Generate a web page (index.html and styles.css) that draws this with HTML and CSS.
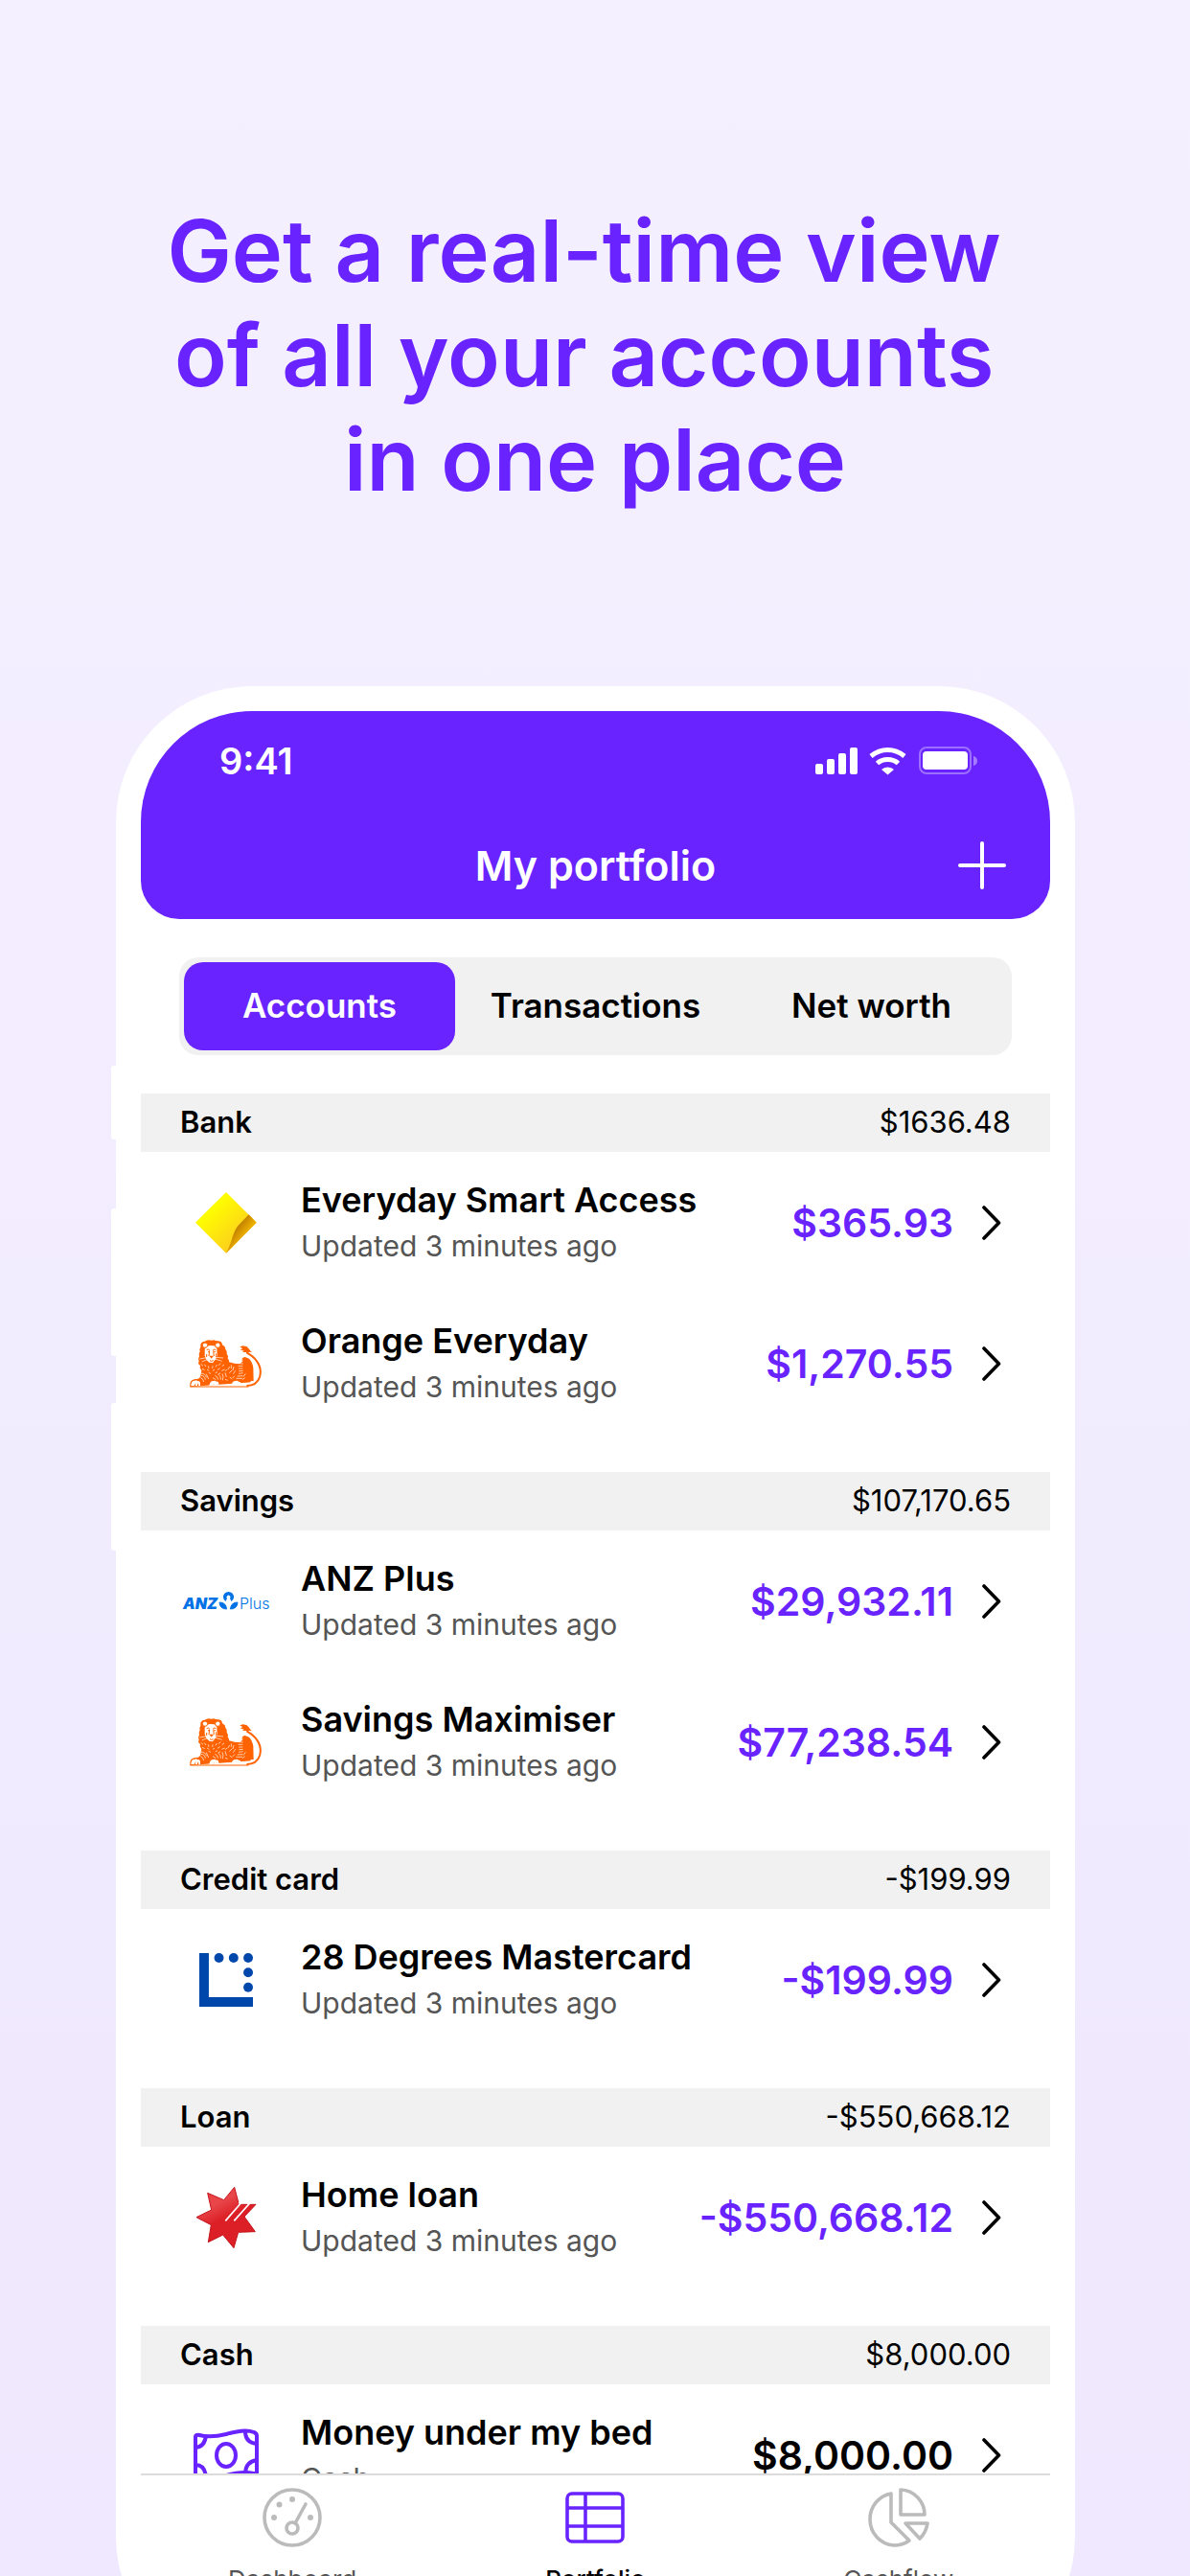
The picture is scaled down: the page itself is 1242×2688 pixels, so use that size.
FILE: index.html
```html
<!DOCTYPE html>
<html lang="en">
<head>
  <meta charset="UTF-8">
  <meta name="viewport" content="width=device-width, initial-scale=1">
  <title>My portfolio</title>
  <link rel="stylesheet" href="styles.css">
</head>
<body>
  <!-- shared icons -->
  <svg class="sprite" aria-hidden="true">
    <symbol id="chevron" viewBox="0 0 20 36">
      <path d="M2 2l15.500 16L2 34" fill="none" stroke="#000" stroke-width="3.600" stroke-linecap="round" stroke-linejoin="round"/>
    </symbol>
    <symbol id="lion" viewBox="0 0 228 148">
      <path d="M1 146v-10q2-11 14-13l12-2q8-4 8-14l2-12-5-8 1-7-6-6 2-8-2-7 3-8-1-8 3-7-1-7 3-7 0-9q4-9 13-9l6-3 7-1 8 1 7-1 7 2 6 1q13 0 14 12l8 6 2 8 4 6 0 8 4 7-1 7 4 7 0 5 9 2q12 5 26 2l6-5q-3-13 9-15l13 5q11 12 13 29l1 41h-9v4z" fill="#ff6200"/>
      <path d="M178 143q32 0 41-27 8-26-9-50-10-15-32-27" fill="none" stroke="#ff6200" stroke-width="6"/>
      <path d="M157 21l10-3 11 2 6 6 7 9 4 4-8-2-5 3-7-2-10 0 5-4-12-4 8-3z" fill="#ff6200"/>
      <path d="M51 20l12-3 14 1 8 8 1 22-5 12-9 12-11-2-9-9-5-13 0-19z" fill="#fff"/>
      <g fill="#fff" stroke="#ff6200" stroke-width="3">
        <circle cx="48" cy="16" r="8"/>
        <circle cx="88" cy="16" r="8"/>
      </g>
      <g fill="none" stroke="#ff6200" stroke-width="3">
        <path d="M53 31q5-4 9 0M73 31q5-4 9 0M62 33l-2 17M74 33l2 17M57 37h4M76 37h5M53 44v9M83 42v11M63 64q5 4 11 0"/>
      </g>
      <path d="M61 49h14l-7 9z" fill="#ff6200"/>
      <g fill="none" stroke="#fff" stroke-width="2">
        <path d="M54 55l-23 4M57 60l-19 8M83 54l22 2M81 60l20 6"/>
        <path d="M35 75l7 6M46 76l5 7M58 81l2 8M72 81l-1 8M86 77l-5 7M97 73l-7 6M39 90l8 4M54 92l7 4M78 93l-6 3M95 88l-8 5M108 77l-7 5M110 92l-10 4M59 102l7 3M80 103l7-3M96 103l-7 4"/>
        <path d="M35 104q15 1 17 13M35 111q12 0 14 13M34 118q8 2 10 13M52 106l7 16"/>
        <path d="M79 111q9 3 10 13M90 108q8 5 7 16M102 105q5 9 1 21M72 118l10 6M111 102l4 14M118 92l-7 5M125 83l-5 9M130 78l0 11M133 94l-9 9M138 83l-3 12M143 96l-7 10M141 112l-7 7M125 116l8 6M111 123l8 3"/>
        <path d="M155 65l11 2M153 73l14 1M152 81l14 0M153 89l13 0M154 97l13-1M153 105l14-2M149 113l17-1M145 120l20 0M160 61l7 1M175 105l-7 10M173 118l-8 6"/>
      </g>
      <g fill="#fff">
        <path d="M4 143q0-16 12-16 6-3 8 2 7-3 9 5v9h-5l-1-9-4 9h-5l1-9-5 9z"/>
        <path d="M61 145q1-17 13-17 6-3 9 2 7-2 8 7v8h-6l0-8-4 8h-5l0-8-5 8z"/>
        <path d="M131 144q1-16 12-16 7-3 10 2 7-1 7 7v7h-6v-7l-4 7h-5v-7l-5 7z"/>
      </g>
      <path d="M1 146h184" stroke="#ff6200" stroke-width="3"/>
    </symbol>
  </svg>

  <main class="page">
    <h1 class="headline">Get a real-time view&nbsp;<br>of all your accounts&nbsp;<br>in one place</h1>

    <div class="phone">
      <span class="side-button side-button-mute"></span>
      <span class="side-button side-button-up"></span>
      <span class="side-button side-button-down"></span>

      <div class="screen">
        <header class="top">
          <div class="status-bar">
            <span class="time">9:41</span>
            <svg width="170" height="30" viewBox="0 0 170 30" aria-hidden="true">
              <g fill="#fff">
                <rect x="0" y="18" width="8" height="11" rx="2"/>
                <rect x="12" y="13" width="8" height="16" rx="2"/>
                <rect x="24" y="7" width="8" height="22" rx="2"/>
                <rect x="36" y="1" width="8" height="28" rx="2"/>
                <path d="M75.500 21.500q-4 0-6.500 2.500l6.500 5.500 6.500-5.500q-2.500-2.500-6.500-2.500z"/>
              </g>
              <g fill="none" stroke="#fff" stroke-width="5">
                <path d="M58 10q8-6.500 17.500-6.500T93 10"/>
                <path d="M64.500 17.500q4.500-4 11-4t11 4"/>
              </g>
              <rect x="109" y="1" width="53" height="27" rx="7" fill="none" stroke="#fff" stroke-opacity=".35" stroke-width="2"/>
              <rect x="112" y="5" width="47" height="19" rx="4" fill="#fff"/>
              <path d="M165 10q4 1 4 5t-4 5z" fill="#fff" fill-opacity=".4"/>
            </svg>
          </div>
          <div class="title-bar">
            <h2 class="title">My portfolio</h2>
            <button class="add" type="button" aria-label="Add account">
              <svg width="50" height="50" viewBox="0 0 50 50">
                <path d="M25 2v46M2 25h46" stroke="#fff" stroke-width="4" stroke-linecap="round"/>
              </svg>
            </button>
          </div>
        </header>

        <div class="segments">
          <button class="segment active" type="button">Accounts</button>
          <button class="segment" type="button">Transactions</button>
          <button class="segment" type="button">Net worth</button>
        </div>

        <div class="list">
          <section class="group">
            <h3 class="group-head"><span>Bank</span><span class="total">$1636.48</span></h3>
            <a class="account" href="#">
              <span class="logo">
                <svg width="64" height="64" viewBox="0 0 192 192">
                  <defs>
                    <linearGradient id="cba" x1="0" y1="0" x2="1" y2="1">
                      <stop offset=".25" stop-color="#ffff00"/>
                      <stop offset=".75" stop-color="#fcd01c"/>
                    </linearGradient>
                    <linearGradient id="fold" x1="0" y1="0" x2="1" y2="1">
                      <stop offset=".2" stop-color="#a86400"/>
                      <stop offset=".6" stop-color="#f0b400"/>
                      <stop offset="1" stop-color="#ffd400"/>
                    </linearGradient>
                  </defs>
                  <path d="M96 0l95 95-95 96L0 95z" fill="url(#cba)"/>
                  <path d="M167 70l24 25-95 96q10-18 16-38 10-36 22-49z" fill="url(#fold)"/>
                </svg>
              </span>
              <span class="info"><span class="name">Everyday Smart Access</span><span class="sub">Updated 3 minutes ago</span></span>
              <span class="amount">$365.93</span>
              <svg class="chevron"><use href="#chevron"/></svg>
            </a>
            <a class="account" href="#">
              <span class="logo"><svg width="76" height="50"><use href="#lion"/></svg></span>
              <span class="info"><span class="name">Orange Everyday</span><span class="sub">Updated 3 minutes ago</span></span>
              <span class="amount">$1,270.55</span>
              <svg class="chevron"><use href="#chevron"/></svg>
            </a>
          </section>

          <section class="group">
            <h3 class="group-head"><span>Savings</span><span class="total">$107,170.65</span></h3>
            <a class="account" href="#">
              <span class="logo">
                <svg class="anz-logo" width="92" height="20" viewBox="0 0 92 20" fill="#0072e5">
                  <text class="anz" x="1" y="18">ANZ</text>
                  <text class="anz-plus" x="60" y="18">Plus</text>
                  <path d="M45.500 10a5.500 5.500 0 1 1 6 0l-1.500-3a2 2 0 1 0-3 0z"/>
                  <path d="M39 11q7 0 7.500 7-7 0-7.500-7zM58 11q-7 0-7.500 7 7 0 7.500-7z" stroke="#0072e5"/>
                </svg>
              </span>
              <span class="info"><span class="name">ANZ Plus</span><span class="sub">Updated 3 minutes ago</span></span>
              <span class="amount">$29,932.11</span>
              <svg class="chevron"><use href="#chevron"/></svg>
            </a>
            <a class="account" href="#">
              <span class="logo"><svg width="76" height="50"><use href="#lion"/></svg></span>
              <span class="info"><span class="name">Savings Maximiser</span><span class="sub">Updated 3 minutes ago</span></span>
              <span class="amount">$77,238.54</span>
              <svg class="chevron"><use href="#chevron"/></svg>
            </a>
          </section>

          <section class="group">
            <h3 class="group-head"><span>Credit card</span><span class="total">-$199.99</span></h3>
            <a class="account" href="#">
              <span class="logo">
                <svg width="56" height="56" viewBox="0 0 169 169" fill="#0047ab">
                  <path d="M0 0h30v139h139v30H0z"/>
                  <circle cx="62" cy="15" r="15"/>
                  <circle cx="108" cy="15" r="15"/>
                  <circle cx="154" cy="15" r="15"/>
                  <circle cx="154" cy="61" r="15"/>
                  <circle cx="154" cy="108" r="15"/>
                </svg>
              </span>
              <span class="info"><span class="name">28 Degrees Mastercard</span><span class="sub">Updated 3 minutes ago</span></span>
              <span class="amount">-$199.99</span>
              <svg class="chevron"><use href="#chevron"/></svg>
            </a>
          </section>

          <section class="group">
            <h3 class="group-head"><span>Loan</span><span class="total">-$550,668.12</span></h3>
            <a class="account" href="#">
              <span class="logo">
                <svg width="64" height="64" viewBox="69 93 192 192">
                  <defs>
                    <linearGradient id="nab" x1="0" y1="0" x2=".5" y2="1">
                      <stop offset="0" stop-color="#ee3a3e"/>
                      <stop offset=".35" stop-color="#e8474a"/>
                      <stop offset=".6" stop-color="#dc1f26"/>
                    </linearGradient>
                  </defs>
                  <path d="M107 112l51 22 33-40 14 54h53l-36 38 34 47-53 2-14 49-34-41-46 23 9-54-46-24 47-23z" fill="url(#nab)" stroke="#c3161c" stroke-width="3" stroke-linejoin="round"/>
                  <path d="M163 199l48-55-7-2M190 199l50-56-8 3" fill="none" stroke="#fff" stroke-width="5"/>
                </svg>
              </span>
              <span class="info"><span class="name">Home loan</span><span class="sub">Updated 3 minutes ago</span></span>
              <span class="amount">-$550,668.12</span>
              <svg class="chevron"><use href="#chevron"/></svg>
            </a>
          </section>

          <section class="group">
            <h3 class="group-head"><span>Cash</span><span class="total">$8,000.00</span></h3>
            <a class="account" href="#">
              <span class="logo">
                <svg width="70" height="56" viewBox="0 0 70 56" fill="none" stroke="#6823ff" stroke-width="4">
                  <path d="M3 9q0-3 4-2 12 3 28-1 20-6 29-2 3 1 3 4v38q0 2-3 1-12-3-29 2-16 5-29 1-3-1-3-4z"/>
                  <path d="M3 20q10-1 11-13M55 3q0 12 12 13M3 38q10 0 11 13M55 47q0-12 12-14"/>
                  <ellipse cx="35" cy="28" rx="10" ry="12"/>
                </svg>
              </span>
              <span class="info"><span class="name">Money under my bed</span><span class="sub">Cash</span></span>
              <span class="amount manual">$8,000.00</span>
              <svg class="chevron"><use href="#chevron"/></svg>
            </a>
          </section>
        </div>

        <nav class="tab-bar">
          <a class="tab" href="#">
            <svg width="64" height="64" viewBox="0 0 64 64" fill="none" stroke="#bbb" stroke-width="3.600" stroke-linecap="round">
              <circle cx="32" cy="32" r="29"/>
              <circle cx="32" cy="43" r="6"/>
              <path d="M35 38l11-20"/>
              <g fill="#bbb" stroke="none">
                <circle cx="13" cy="32" r="3"/>
                <circle cx="18.500" cy="18.500" r="3"/>
                <circle cx="32" cy="13" r="3"/>
                <circle cx="51" cy="32" r="3"/>
              </g>
            </svg>
            <span>Dashboard</span>
          </a>
          <a class="tab current" href="#">
            <svg width="64" height="64" viewBox="0 0 64 64" fill="none" stroke="#6823ff" stroke-width="3.600">
              <rect x="3" y="7" width="58" height="50" rx="5"/>
              <path d="M3 22h58M3 41h58M22 7v50"/>
            </svg>
            <span>Portfolio</span>
          </a>
          <a class="tab" href="#">
            <svg width="64" height="64" viewBox="0 0 64 64" fill="none" stroke="#bbb" stroke-width="3.600" stroke-linejoin="round">
              <path d="M24 7v30l19 19a27 27 0 0 1-16 5A27 27 0 0 1 2 34 27 27 0 0 1 24 7z"/>
              <path d="M34 3a26 26 0 0 1 25 26H34z"/>
              <path d="M39 38h23a28 28 0 0 1-8 16z"/>
            </svg>
            <span>Cashflow</span>
          </a>
        </nav>
      </div>
    </div>
  </main>
</body>
</html>
```
FILE: styles.css
```css
* {
  box-sizing: border-box;
}
body {
  margin: 0;
  font-family: Inter, "Liberation Sans", sans-serif;
  color: #000;
}
a {
  color: inherit;
  text-decoration: none;
}
button {
  border: 0;
  padding: 0;
  background: none;
  font: inherit;
  color: inherit;
}
h1, h2, h3 {
  margin: 0;
}
.sprite {
  display: none;
}
.page {
  display: flex;
  flex-direction: column;
  height: 100vh;
  overflow: hidden;
  background: linear-gradient(to bottom, #f5f0ff, #efe8fe);
}
.headline {
  padding: 207px 0 182px;
  font-size: 90px;
  line-height: 109px;
  font-weight: 600;
  text-align: center;
  color: #6823ff;
}

/* the phone runs off the bottom of the page */
.phone {
  position: relative;
  flex: 1;
  min-height: 0;
  margin: 0 120px -101px 121px;
  padding: 26px;
  border-radius: 142px;
  background: #fff;
}
.side-button {
  position: absolute;
  left: -5px;
  width: 8px;
  height: 154px;
  border-radius: 3px;
  background: #fff;
}
.side-button-mute {
  top: 396px;
  height: 77px;
}
.side-button-up {
  top: 545px;
}
.side-button-down {
  top: 748px;
}
.screen {
  display: flex;
  flex-direction: column;
  height: 100%;
  border-radius: 116px;
  overflow: hidden;
}

.top {
  flex: none;
  border-radius: 0 0 40px 40px;
  background: #6823ff;
  color: #fff;
}
.status-bar {
  display: flex;
  align-items: center;
  justify-content: space-between;
  height: 104px;
  padding: 0 75px 0 82px;
}
.time {
  font-size: 38px;
  font-weight: 600;
}
.title-bar {
  display: grid;
  grid-template-columns: 1fr auto 1fr;
  align-items: center;
  height: 113px;
  padding: 0 46px;
}
.title {
  grid-column: 2;
  font-size: 43px;
  font-weight: 600;
}
.add {
  justify-self: end;
  height: 50px;
}

.segments {
  flex: none;
  display: grid;
  grid-template-columns: repeat(3, 1fr);
  gap: 5px;
  height: 102px;
  margin: 40px;
  padding: 5px;
  border-radius: 20px;
  background: #f1f1f1;
}
.segment {
  padding-bottom: 2px;
  border-radius: 20px;
  font-size: 35px;
  font-weight: 600;
}
.segment.active {
  background: #6823ff;
  color: #fff;
}

.list {
  flex: 1;
  min-height: 0;
  overflow: hidden;
}
.group {
  padding-bottom: 40px;
}
.group-head {
  display: flex;
  align-items: center;
  justify-content: space-between;
  height: 61px;
  padding: 0 41px 2px;
  background: #f1f1f1;
  font-size: 31px;
  font-weight: 600;
}
.total {
  font-weight: 400;
}
.account {
  display: flex;
  align-items: center;
  height: 147px;
  padding: 0 51px 0 40px;
}
.logo {
  display: flex;
  justify-content: center;
  width: 97px;
  margin-right: 30px;
}
.anz-logo {
  overflow: visible;
}
.anz {
  font-size: 16px;
  font-weight: 900;
  font-style: italic;
}
.anz-plus {
  font-size: 16px;
  font-weight: 300;
}
.info {
  flex: 1;
  display: flex;
  flex-direction: column;
  line-height: 48px;
  white-space: nowrap;
}
.name {
  font-size: 36px;
  font-weight: 600;
}
.sub {
  font-size: 30px;
  color: #555;
}
.amount {
  font-size: 41px;
  font-weight: 600;
  color: #6823ff;
}
.amount.manual {
  color: #000;
}
.chevron {
  width: 20px;
  height: 36px;
  margin-left: 30px;
}

.tab-bar {
  flex: none;
  display: grid;
  grid-template-columns: repeat(3, 1fr);
  height: 182px;
  padding-top: 12px;
  border-top: 2px solid #dcdcdc;
  background: #fff;
}
.tab {
  display: flex;
  flex-direction: column;
  align-items: center;
  gap: 17px;
  font-size: 26px;
  font-weight: 400;
  color: #555;
}
.tab.current {
  font-weight: 500;
  color: #000;
}
```
